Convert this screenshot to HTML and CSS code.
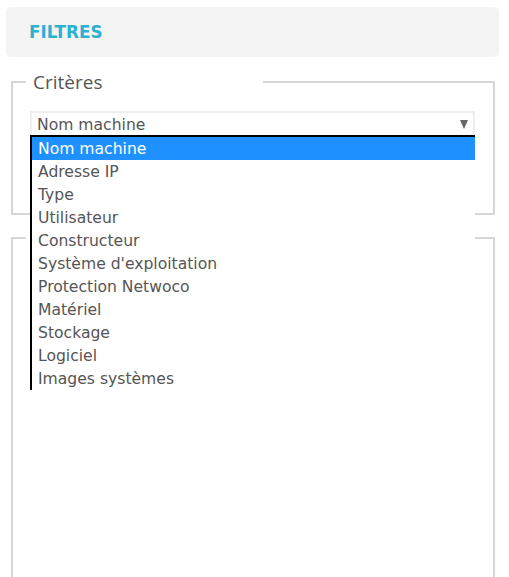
FILE: index.html
```html
<!DOCTYPE html>
<html lang="fr">
<head>
<meta charset="utf-8">
<title>Filtres</title>
<link rel="stylesheet" href="styles.css">
</head>
<body>
<div class="page">
  <div class="header"><span class="title">FILTRES</span></div>
  <fieldset class="group first">
    <legend class="legend">Critères</legend>
    <div class="select-wrap">
      <div class="select">
        <span class="select-value">Nom machine</span>
        <span class="arrow"></span>
      </div>
      <ul class="dropdown">
        <li class="option selected">Nom machine</li>
        <li class="option">Adresse IP</li>
        <li class="option">Type</li>
        <li class="option">Utilisateur</li>
        <li class="option">Constructeur</li>
        <li class="option">Système d'exploitation</li>
        <li class="option">Protection Netwoco</li>
        <li class="option">Matériel</li>
        <li class="option">Stockage</li>
        <li class="option">Logiciel</li>
        <li class="option">Images systèmes</li>
      </ul>
    </div>
  </fieldset>
  <fieldset class="group second">
    <legend class="legend empty">&nbsp;</legend>
  </fieldset>
</div>
</body>
</html>
```

FILE: styles.css
```css
html, body {
  margin: 0;
  padding: 0;
  background: #ffffff;
  overflow: hidden;
}

body {
  font-family: "DejaVu Sans", "Liberation Sans", sans-serif;
  color: #555555;
}

.page {
  padding: 7px 10px 0 6px;
  height: 577px;
  box-sizing: border-box;
  overflow: hidden;
}

.header {
  height: 50px;
  width: 493px;
  background: #f4f4f4;
  border-radius: 5px;
  display: flex;
  align-items: center;
  padding-left: 23px;
  box-sizing: border-box;
}

.title {
  font-family: "DejaVu Sans", sans-serif;
  font-weight: bold;
  font-size: 16.8px;
  color: #2eb1d1;
  position: relative;
  top: 0px;
}

.group {
  margin: 13px 0 0 5px;
  width: 484px;
  box-sizing: border-box;
  border: 2px solid #d6d6d6;
  padding: 0;
  min-width: 0;
}

.legend {
  margin-left: 13px;
  width: 237px;
  box-sizing: border-box;
  padding: 0 7px;
  font-family: "Open Sans", sans-serif;
  font-size: 19px;
  line-height: 24px;
  height: 24px;
  color: #555555;
}

.first {
  height: 145px;
}

.second {
  margin-top: 11px;
  height: 400px;
}

.select-wrap {
  position: relative;
  margin: 17px 0 0 17px;
  width: 445px;
}

.select {
  height: 26px;
  box-sizing: border-box;
  border: 2px solid #eeeeee;
  display: flex;
  align-items: center;
  justify-content: space-between;
  padding: 0 5px 0 5px;
  font-size: 15.6px;
  color: #555555;
}

.select-value {
  position: relative;
  top: 1px;
}

.arrow {
  width: 0;
  height: 0;
  border-left: 4.5px solid transparent;
  border-right: 4.5px solid transparent;
  border-top: 9px solid #666666;
  position: relative;
  top: 0px;
}

.dropdown {
  position: absolute;
  left: 0;
  top: 24px;
  width: 445px;
  box-sizing: border-box;
  margin: 0;
  padding: 0;
  list-style: none;
  background: #ffffff;
  border-top: 2px solid #000000;
  border-left: 2px solid #000000;
  z-index: 10;
}

.option {
  height: 23px;
  line-height: 24px;
  padding-left: 6px;
  font-size: 15.6px;
  color: #555555;
  white-space: nowrap;
}

.option.selected {
  background: #1e90ff;
  color: #ffffff;
}
```
